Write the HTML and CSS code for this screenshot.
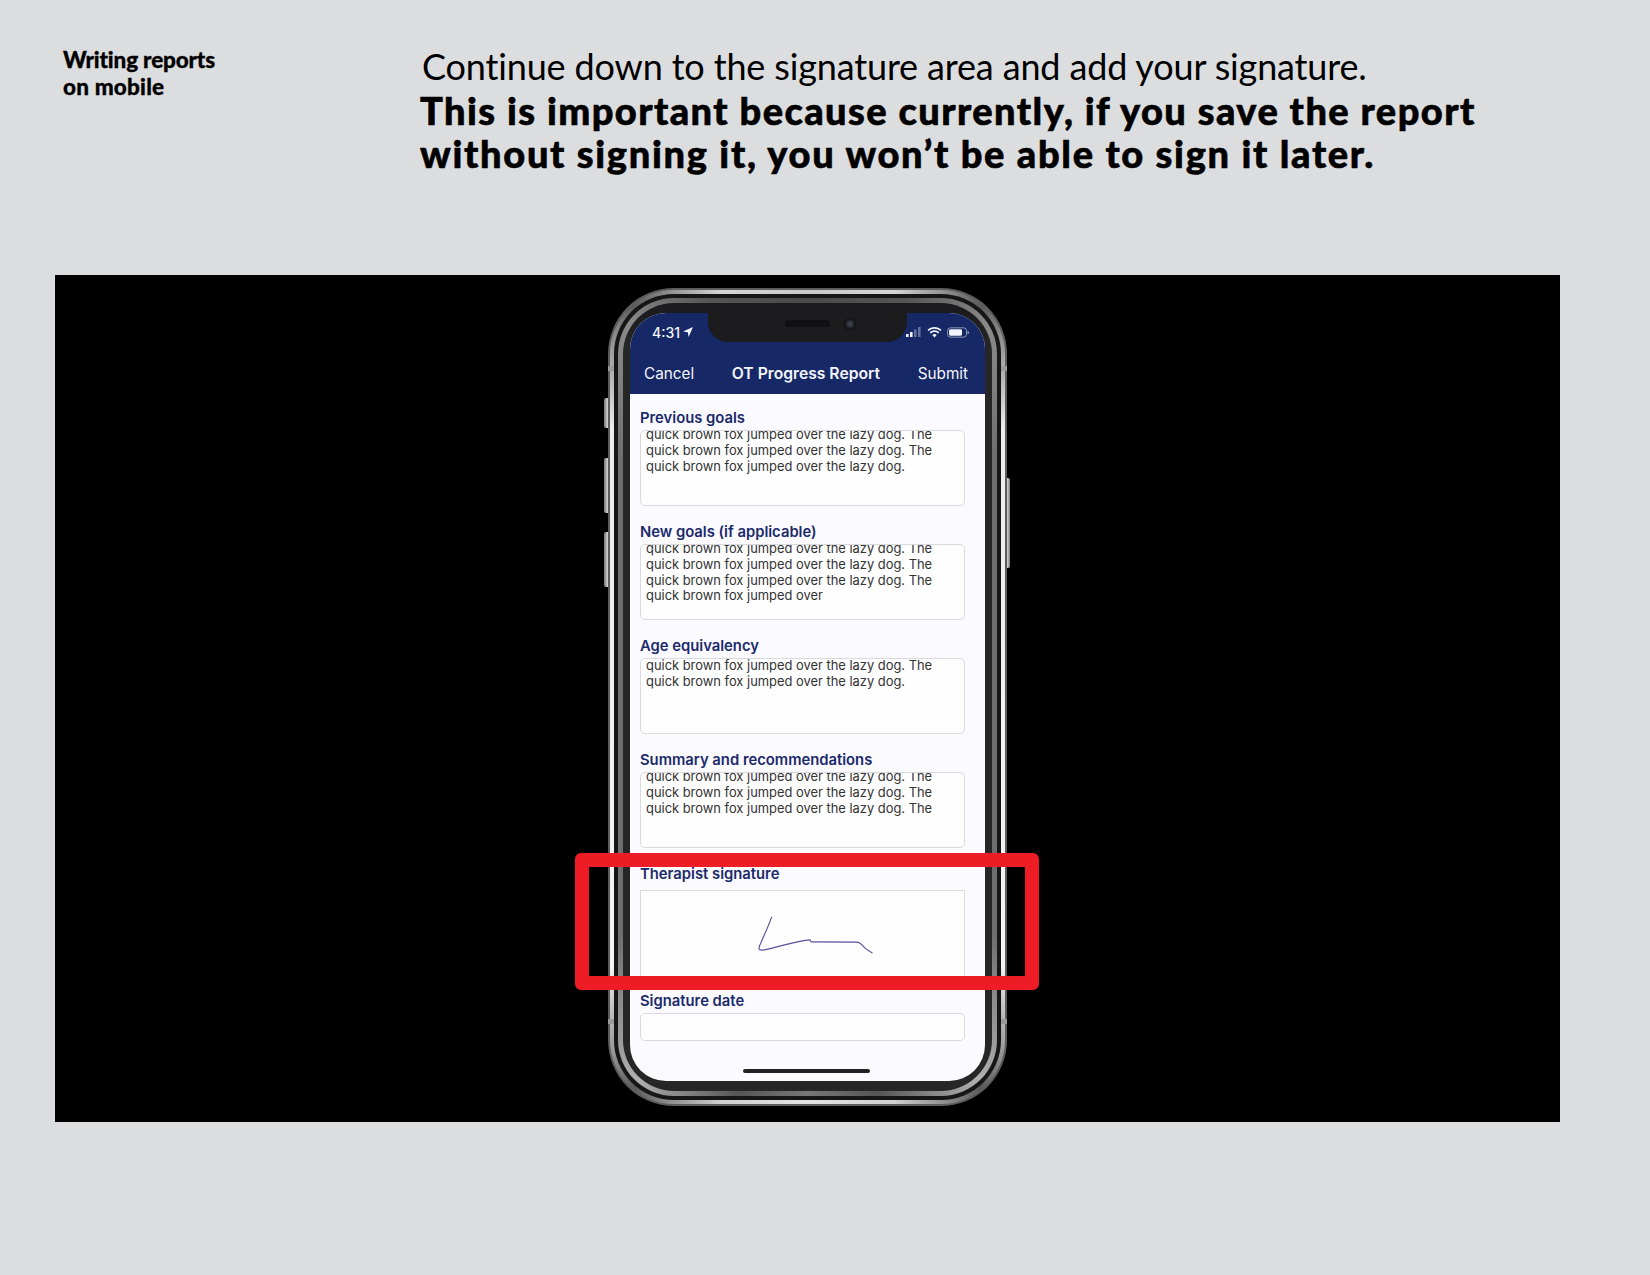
FILE: index.html
```html
<!DOCTYPE html>
<html lang="en">
<head>
<meta charset="utf-8">
<title>Writing reports on mobile</title>
<link rel="stylesheet" href="styles.css">
</head>
<body>
<header class="top">
  <h2 class="section">Writing reports<br><span class="section-sub">on mobile</span></h2>
  <div class="lead">
    <p class="lead-plain">Continue down to the signature area and add your signature.</p>
    <p class="lead-bold">This is important because currently, if you save the report<br><span class="lead-last">without signing it, you won’t be able to sign it later.</span></p>
  </div>
</header>
<main class="stage">
  <div class="phone">
    <span class="btn btn-mute"></span>
    <span class="btn btn-up"></span>
    <span class="btn btn-down"></span>
    <span class="btn btn-power"></span>
    <span class="tick tick-tl"></span>
    <span class="tick tick-tr"></span>
    <span class="tick tick-bl"></span>
    <span class="tick tick-br"></span>
    <div class="ring-a"><div class="ring-b"><div class="ring-c"><div class="ring-d">
      <div class="screen">
        <div class="notch"><span class="speaker"></span><span class="camera"></span></div>
        <div class="appbar">
          <div class="status">
            <span class="time">4:31<svg class="loc" viewBox="0 0 10 10"><path d="M10 0 0 4.6 4.8 5.2 5.6 10Z"/></svg></span>
            <span class="indicators">
              <svg class="signal" viewBox="0 0 16 10"><rect x="0" y="7" width="2.6" height="3" rx=".5"/><rect x="4" y="5" width="2.6" height="5" rx=".5"/><rect class="dim" x="8" y="2.5" width="2.6" height="7.5" rx=".5"/><rect class="dim" x="12" y="0" width="2.6" height="10" rx=".5"/></svg>
              <svg class="wifi" viewBox="0 0 16 12"><path d="M8 11.5 5.6 8.8a3.4 3.4 0 0 1 4.8 0Z"/><path class="arc" d="M3.4 6.4a6.6 6.6 0 0 1 9.2 0"/><path class="arc" d="M1 3.8a10 10 0 0 1 14 0"/></svg>
              <svg class="battery" viewBox="0 0 23 11"><rect class="shell" x=".6" y=".6" width="19.8" height="9.8" rx="3"/><rect x="2.2" y="2.2" width="13.5" height="6.6" rx="1.5"/><path d="M21.6 4v3a1.6 1.6 0 0 0 0-3Z"/></svg>
            </span>
          </div>
          <nav class="nav">
            <span>Cancel</span>
            <strong>OT Progress Report</strong>
            <span>Submit</span>
          </nav>
        </div>
        <form class="form">
          <div class="field">
            <div class="label">Previous goals</div>
            <div class="box"><p class="copy">quick brown fox jumped over the lazy dog. The<br>quick brown fox jumped over the lazy dog. The<br>quick brown fox jumped over the lazy dog.</p></div>
          </div>
          <div class="field">
            <div class="label">New goals (if applicable)</div>
            <div class="box"><p class="copy">quick brown fox jumped over the lazy dog. The<br>quick brown fox jumped over the lazy dog. The<br>quick brown fox jumped over the lazy dog. The<br>quick brown fox jumped over</p></div>
          </div>
          <div class="field">
            <div class="label">Age equivalency</div>
            <div class="box"><p class="copy copy-top">quick brown fox jumped over the lazy dog. The<br>quick brown fox jumped over the lazy dog.</p></div>
          </div>
          <div class="field">
            <div class="label">Summary and recommendations</div>
            <div class="box"><p class="copy">quick brown fox jumped over the lazy dog. The<br>quick brown fox jumped over the lazy dog. The<br>quick brown fox jumped over the lazy dog. The</p></div>
          </div>
          <div class="field field-sig">
            <div class="label">Therapist signature</div>
            <div class="box box-sig">
              <svg class="sig" viewBox="0 0 325 90"><path d="M131 26.5C127 38 121.5 49 118.6 56 117.6 59 118 60.5 120.5 60.5 128 60.5 150 52 170 50 171 50 170 52 171.5 52L218 52.2C222 52.4 224 56 226.5 58.4 229 60.5 231.5 62 234 63.5"/></svg>
            </div>
          </div>
          <div class="field">
            <div class="label">Signature date</div>
            <div class="box box-date"></div>
          </div>
        </form>
        <div class="home"></div>
      </div>
    </div></div></div></div>
    <div class="callout"></div>
  </div>
</main>
</body>
</html>
```
FILE: styles.css
```css
* { box-sizing: border-box; }
html, body { margin: 0; }
body {
  width: 1650px;
  height: 1275px;
  background: #dcdddf;
  color: #000;
  overflow: hidden;
  font-family: "Lato", "Liberation Sans", sans-serif;
}
.top {
  display: flex;
  height: 275px;
  padding: 45px 0 0 63px;
}
.section {
  width: 357px;
  margin: 1px 0 0;
  font-size: 22.5px;
  line-height: 27px;
  font-weight: 900;
  letter-spacing: -0.17px;
  -webkit-text-stroke: 0.3px #000;
}
.section-sub { letter-spacing: 0.2px; }
.lead { font-size: 36px; line-height: 43.5px; }
.lead p { margin: 0; }
.lead-plain { padding-left: 2px; font-weight: 400; letter-spacing: -0.15px; }
.lead-bold { font-size: 38px; font-weight: 900; letter-spacing: 1.42px; -webkit-text-stroke: 0.6px #000; }
.lead-last { letter-spacing: 1.68px; }
.stage {
  display: flex;
  justify-content: center;
  width: 1505px;
  height: 847px;
  margin-left: 55px;
  padding-top: 13px;
  background: #000;
}
.phone {
  position: relative;
  width: 399px;
  height: 818px;
  padding: 2px;
  border-radius: 66px;
  background: #5c5c5c;
}
.ring-a, .ring-b, .ring-c, .ring-d { height: 100%; }
.ring-a {
  padding: 4px;
  border-radius: 64px;
  background: conic-gradient(#c9c9c9 0deg, #d6d6d6 12deg, #5a5a5a 24deg, #eeeeee 36deg, #f4f4f4 144deg, #5a5a5a 156deg, #d0d0d0 168deg, #e4e4e4 180deg, #d0d0d0 192deg, #5a5a5a 204deg, #f4f4f4 216deg, #eeeeee 324deg, #5a5a5a 336deg, #d6d6d6 348deg, #c9c9c9 360deg);
}
.ring-b {
  padding: 4px;
  border-radius: 60px;
  background: #161616;
}
.ring-c {
  padding: 5px;
  border-radius: 56px;
  background: conic-gradient(#4a4a4a 0deg, #555 14deg, #8a8a8a 26deg, #6e6e6e 38deg, #6e6e6e 142deg, #b0b0b0 156deg, #555 170deg, #777 180deg, #555 190deg, #b0b0b0 204deg, #6e6e6e 218deg, #6e6e6e 322deg, #8a8a8a 334deg, #555 346deg, #4a4a4a 360deg);
}
.ring-d {
  padding: 10px 7px 10px;
  border-radius: 51px;
  background: linear-gradient(#1c1c1e 0, #1c1c1e 12px, #262626 40px);
}
.screen {
  position: relative;
  height: 100%;
  overflow: hidden;
  border-radius: 36px;
  background: #fbfaff;
  font-family: "Inter", "Liberation Sans", sans-serif;
}
.appbar { height: 81px; background: #172866; color: #f4f5fa; }
.status {
  display: flex;
  justify-content: space-between;
  align-items: center;
  height: 38px;
  padding: 0 16px 0 22px;
}
.time { display: flex; align-items: center; gap: 3px; font-size: 14px; font-weight: 500; }
.loc { width: 10px; height: 10px; fill: #f4f5fa; }
.indicators { display: flex; align-items: center; gap: 5px; }
.signal { width: 16px; height: 10px; fill: #f4f5fa; }
.signal .dim { opacity: .35; }
.wifi { width: 15px; height: 11px; fill: #f4f5fa; }
.arc { fill: none; stroke: #f4f5fa; stroke-width: 1.9; }
.battery { width: 22px; height: 11px; fill: #f4f5fa; }
.shell { fill: none; stroke: #f4f5fa; stroke-width: 1; opacity: .55; }
.nav {
  display: flex;
  justify-content: space-between;
  align-items: center;
  height: 43px;
  padding: 1px 17px 0 14px;
  font-size: 15.3px;
  font-weight: 400;
}
.nav strong { font-size: 15.7px; font-weight: 600; }
.notch {
  position: absolute;
  top: 0;
  left: 78px;
  display: flex;
  align-items: flex-start;
  width: 199px;
  height: 29px;
  padding: 5px 0 0 77px;
  gap: 14px;
  border-radius: 0 0 20px 20px;
  background: #1c1c1e;
}
.speaker { width: 45px; height: 7px; margin-top: 2px; border-radius: 4px; background: #101012; }
.camera { width: 12px; height: 12px; border-radius: 50%; background: radial-gradient(#3a3d48 20%, #0b0b0d 70%); }
.form { padding: 16px 20px 0 10px; }
.field { margin-bottom: 18px; }
.label {
  height: 16px;
  margin-bottom: 4px;
  font-size: 14.8px;
  line-height: 16px;
  font-weight: 600;
  color: #1b2a6b;
  white-space: nowrap;
}
.box {
  height: 76px;
  overflow: hidden;
  padding: 0 5px;
  border: 1px solid #d9d9de;
  border-radius: 5px;
  background: #fefeff;
}
.copy {
  margin: -4px 0 0;
  font-size: 12.9px;
  line-height: 15.8px;
  color: #333;
  white-space: nowrap;
}
.copy-top { margin-top: -1px; }
.field-sig { margin-bottom: 13px; }
.field-sig .label { margin-bottom: 8px; }
.box-sig {
  height: 90px;
  padding: 0;
  border-radius: 0;
}
.sig { display: block; width: 100%; height: 100%; fill: none; stroke: #5b519f; stroke-width: 1.2; }
.box-date { height: 28px; }
.home {
  position: absolute;
  left: 113px;
  bottom: 8px;
  width: 127px;
  height: 4px;
  border-radius: 2px;
  background: #222;
}
.btn {
  position: absolute;
  width: 4px;
  border-radius: 2px 0 0 2px;
  background: linear-gradient(90deg, #777, #d8d8d8);
}
.btn-mute { left: -4px; top: 110px; height: 30px; }
.btn-up { left: -4px; top: 170px; height: 55px; }
.btn-down { left: -4px; top: 244px; height: 55px; }
.btn-power { right: -3px; top: 190px; width: 3px; height: 90px; border-radius: 0 2px 2px 0; background: linear-gradient(270deg, #777, #d8d8d8); }
.tick { position: absolute; width: 6px; height: 5px; background: #9a9a9a; z-index: 1; }
.tick-tl { left: 0; top: 78px; }
.tick-tr { right: 0; top: 78px; }
.tick-bl { left: 0; bottom: 82px; }
.tick-br { right: 0; bottom: 82px; }
.callout {
  position: absolute;
  left: -33px;
  top: 565px;
  width: 464px;
  height: 137px;
  border: 14.5px solid #ee1c25;
  border-radius: 6px;
  z-index: 2;
}
```
